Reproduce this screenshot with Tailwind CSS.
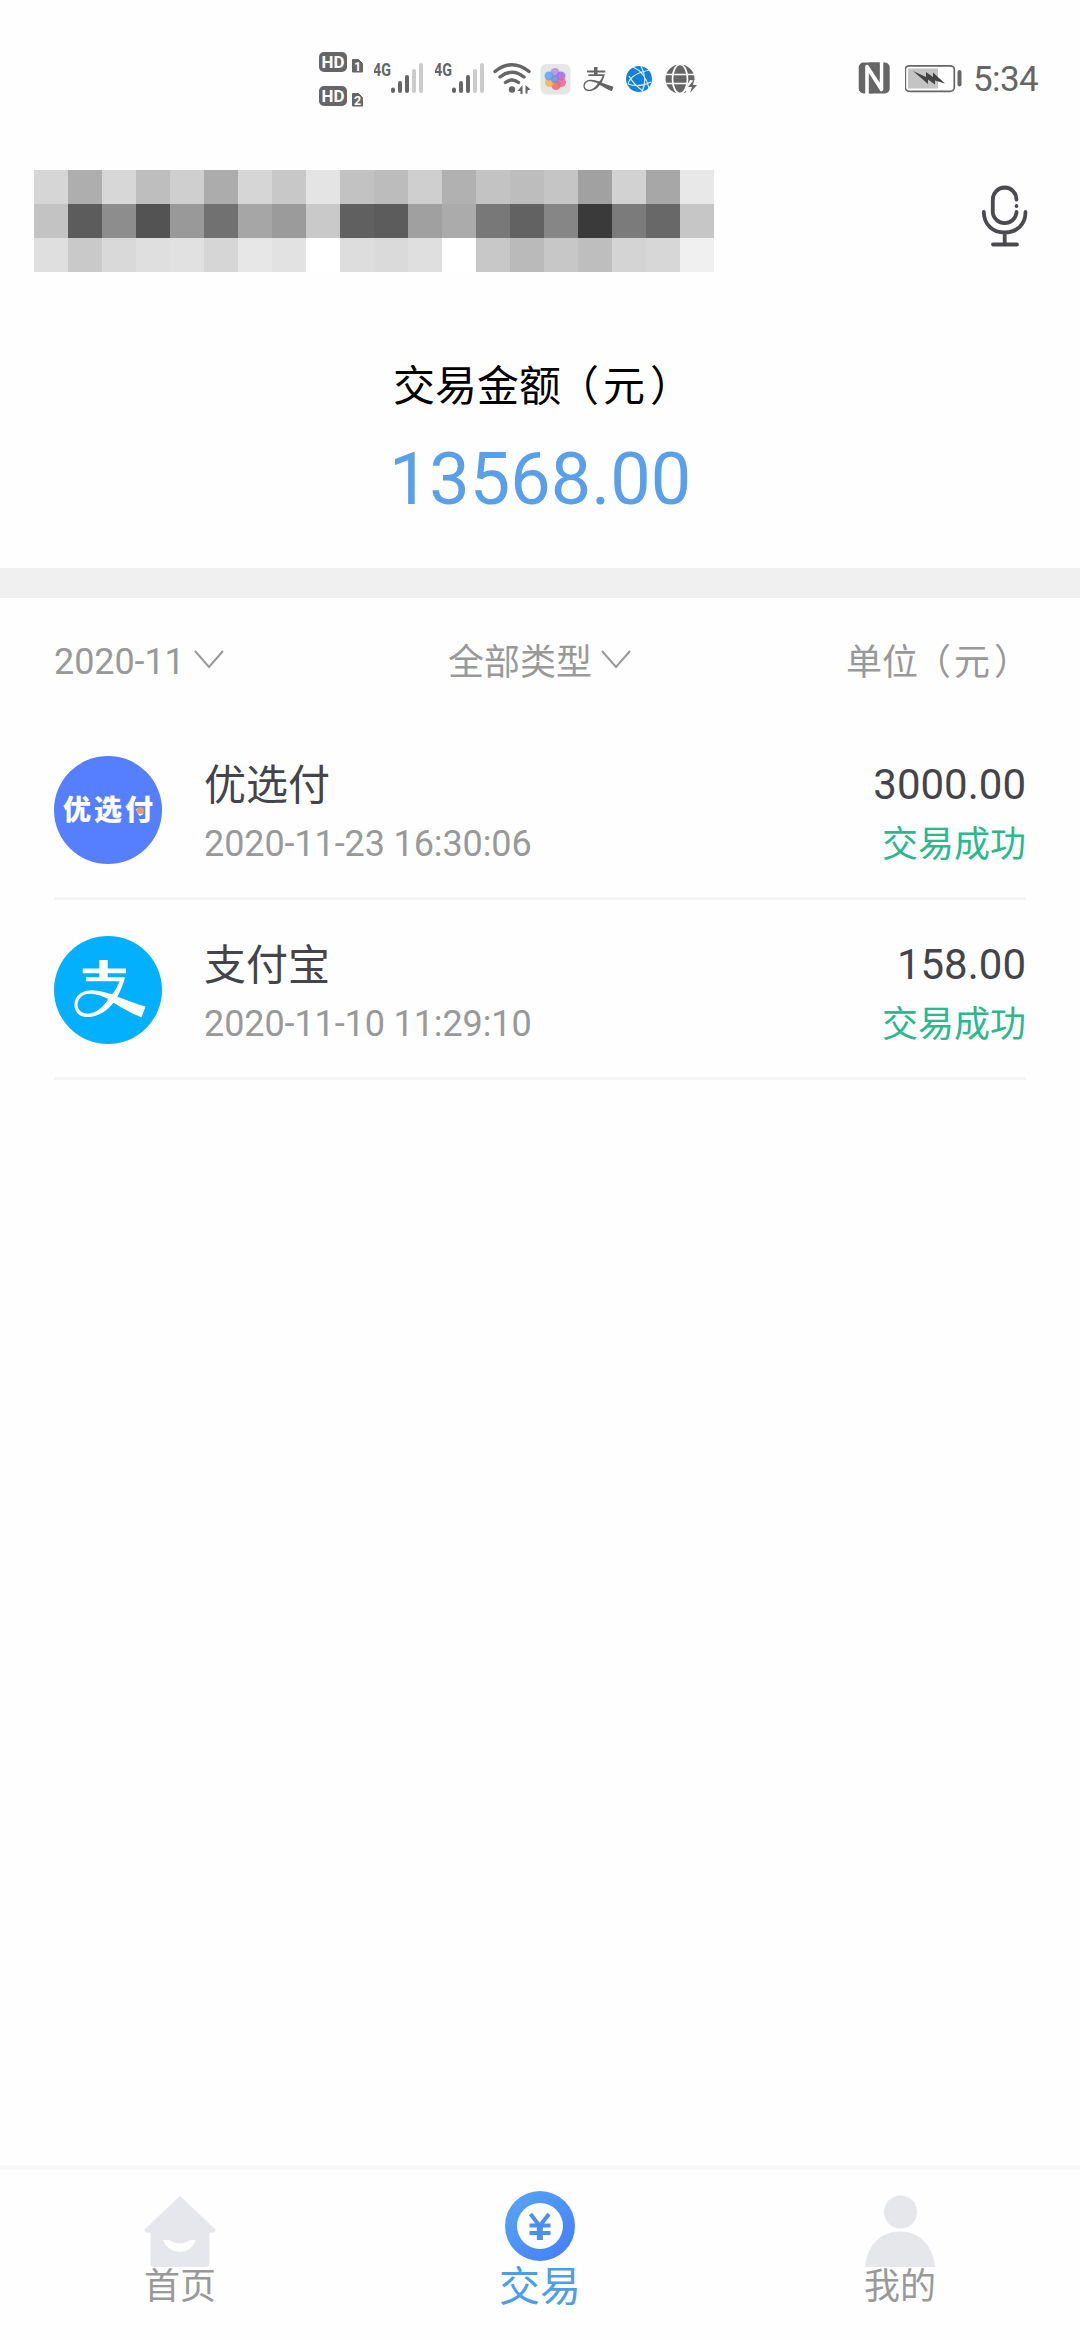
<!DOCTYPE html>
<html lang="zh-CN">
<head>
<meta charset="utf-8">
<title>交易</title>
<script src="https://cdn.jsdelivr.net/npm/@tailwindcss/browser@4"></script>
</head>
<body class="flex h-[2340px] w-[1080px] flex-col overflow-hidden bg-[#fefefe] font-['Noto_Sans_CJK_SC',sans-serif] text-[#999]">

<svg class="hidden">
  <symbol id="alipay" viewBox="20 24 72 58">
    <path d="M45.3 24h8.400v8.500H72v4.800H53.700v4H71C68 53 62 66 53 73.500C44 81 32 83 25.500 79C18.500 74 19 63 25.500 58C35 51 48 55 58 58.500C62 54 64 49 65.500 45.300H32v-4H45.300v-4H28.700v-4.800H45.300Z M54.500 63C45 58.500 33 55 27 61C22 66 22.500 73 27.500 76C37 81 47 74 54.500 63Z" fill="currentColor" fill-rule="evenodd"/>
    <path d="M56 57.500C68 62.500 79 67 91.500 70.500L87.500 81.500C74 76 64 69 53.500 63.500Z" fill="currentColor"/>
  </symbol>
</svg>

<!-- status bar -->
<header class="flex h-[170px] shrink-0 pt-[45px] pl-[319px] text-[#666]">
  <svg class="h-[65px] w-[55px]" viewBox="319 45 55 65" fill="#666">
    <rect x="319" y="52" width="28" height="20" rx="5"/>
    <rect x="319" y="86" width="28" height="20" rx="5"/>
    <path d="M352.500 59.500h6l4 4v8.500h-10z M352.500 93.500h6l4 4v8.500h-10z" stroke="#666" stroke-linejoin="round"/>
    <g fill="#fff" font-family="Roboto" font-weight="700">
      <text x="321.500" y="68" font-size="17" textLength="23" lengthAdjust="spacingAndGlyphs">HD</text>
      <text x="321.500" y="102" font-size="17" textLength="23" lengthAdjust="spacingAndGlyphs">HD</text>
      <text x="354" y="70.500" font-size="12.500">1</text>
      <text x="354" y="104.500" font-size="12.500">2</text>
    </g>
  </svg>
  <svg class="h-[65px] w-[61px]" viewBox="374 45 61 65">
    <text x="373" y="76" font-family="Roboto" font-weight="700" font-size="18" textLength="18" lengthAdjust="spacingAndGlyphs" fill="#666">4G</text>
    <g stroke-width="4" stroke-linecap="round"><path d="M393 89.500v1.500M400 83v8M407 77v14" stroke="#666"/><path d="M414 71v20M421 65v26" stroke="#cbcbcb"/></g>
  </svg>
  <svg class="h-[65px] w-[57px]" viewBox="435 45 57 65">
    <text x="434" y="76" font-family="Roboto" font-weight="700" font-size="18" textLength="18" lengthAdjust="spacingAndGlyphs" fill="#666">4G</text>
    <g stroke-width="4" stroke-linecap="round"><path d="M454 89.500v1.500M461 83v8M468 77v14" stroke="#666"/><path d="M475 71v20M482 65v26" stroke="#cbcbcb"/></g>
  </svg>
  <svg class="h-[65px] w-[48px]" viewBox="492 45 48 65">
    <g fill="none" stroke="#666" stroke-width="3.400" stroke-linecap="round"><path d="M495 71.500Q512 58 529 71.500M500 77Q512 67.500 524 77M505.500 82.500Q512 77.500 518.500 82.500"/></g>
    <circle cx="512" cy="89.500" r="3.200" fill="#666"/>
    <path d="M522.500 85v9h-2v-3h-3zM525.500 85l5 4.500-3 1v3h-2z" fill="#666"/>
  </svg>
  <svg class="h-[65px] w-[43px]" viewBox="540 45 43 65">
    <rect x="540.500" y="64" width="30" height="30.500" rx="6" fill="#e6e6e6"/>
    <g fill-opacity=".85"><circle cx="555" cy="72.500" r="4.500" fill="#b78ae0"/><circle cx="561" cy="76" r="4.500" fill="#a06be0"/><circle cx="561.500" cy="82.500" r="4.500" fill="#f0609a"/><circle cx="556" cy="85.500" r="4.500" fill="#f06a60"/><circle cx="549.500" cy="82.500" r="4.500" fill="#f7b34e"/><circle cx="549" cy="76" r="4.500" fill="#58a7ee"/><circle cx="555" cy="79" r="4" fill="#6f8fe6"/></g>
  </svg>
  <div class="flex w-[43px] pt-[22px]"><svg class="h-[24.500px] w-[31px]"><use href="#alipay"/></svg></div>
  <svg class="h-[65px] w-[39px]" viewBox="626 45 39 65">
    <circle cx="639" cy="79" r="13" fill="#1580d8"/>
    <g fill="none" stroke="#d9efff" stroke-width="1.200"><path d="M628 84Q631 73 651 70M633 67Q645 72 649 88M628 84Q640 88 651 82M641 66Q648 79 642 92M629 76Q634 85 643 91"/></g>
  </svg>
  <svg class="h-[65px] w-[193px]" viewBox="665 45 193 65">
    <circle cx="680" cy="79" r="14.500" fill="#666"/>
    <g fill="none" stroke="#fefefe" stroke-width="1.700"><path d="M664 74.500h32M664 83.500h32"/><ellipse cx="680" cy="79" rx="7.500" ry="14.500"/></g>
    <path d="M690 80l8 1-1 7-5 7-7-4z" fill="#fefefe"/><path d="M694.500 79l-6.500 8h4l-2 6 7-8h-4z" fill="#666"/>
  </svg>
  <svg class="h-[65px] w-[47px]" viewBox="858 45 47 65">
    <rect x="858.700" y="62.500" width="31" height="31" rx="5" fill="#666"/>
    <path d="M867 94V66.500L882 89.500M866.500 66L881.500 89.500V61" fill="none" stroke="#fefefe" stroke-width="3.600" stroke-linejoin="round"/>
    <path d="M869.500 93.500V76L880 92.500" fill="#666"/>
    <path d="M869 62.500L879.500 79V62.500Z" fill="#666"/>
  </svg>
  <svg class="h-[65px] w-[68px]" viewBox="905 45 68 65">
    <rect x="905.300" y="65.800" width="49" height="25.500" rx="4" fill="#fefefe" stroke="#666" stroke-width="1.700"/>
    <rect x="908" y="68.500" width="30" height="20" fill="#c4c4c4"/>
    <path d="M913 71l13 6v-5l7 5v-4.500l12 11-10-3v4l-7-5v4.500z" fill="#444"/>
    <rect x="957.500" y="70" width="4" height="16.500" rx="2" fill="#666"/>
  </svg>
  <span class="font-[Roboto] text-[35px] leading-[70px] tracking-[-0.600px]">5:34</span>
</header>

<!-- masked merchant name and voice button -->
<section class="flex h-[152px] shrink-0 justify-between pr-[51px] pl-[34px]">
  <div class="grid h-[102px] w-[680px] grid-cols-20 grid-rows-3">
    <i class="bg-[#d6d6d6]"></i><i class="bg-[#aeaeae]"></i><i class="bg-[#d7d7d7]"></i><i class="bg-[#bebebe]"></i><i class="bg-[#cfcfcf]"></i><i class="bg-[#acacac]"></i><i class="bg-[#d6d6d6]"></i><i class="bg-[#c8c8c8]"></i><i class="bg-[#e4e4e4]"></i><i class="bg-[#c2c2c2]"></i><i class="bg-[#bcbcbc]"></i><i class="bg-[#cfcfcf]"></i><i class="bg-[#b1b1b1]"></i><i class="bg-[#c3c3c3]"></i><i class="bg-[#bdbdbd]"></i><i class="bg-[#c5c5c5]"></i><i class="bg-[#a1a1a1]"></i><i class="bg-[#d2d2d2]"></i><i class="bg-[#a7a7a7]"></i><i class="bg-[#e8e8e8]"></i>
    <i class="bg-[#c3c3c3]"></i><i class="bg-[#5c5c5c]"></i><i class="bg-[#8d8d8d]"></i><i class="bg-[#535353]"></i><i class="bg-[#999999]"></i><i class="bg-[#717171]"></i><i class="bg-[#a6a6a6]"></i><i class="bg-[#9b9b9b]"></i><i class="bg-[#c9c9c9]"></i><i class="bg-[#606060]"></i><i class="bg-[#5c5c5c]"></i><i class="bg-[#a0a0a0]"></i><i class="bg-[#ababab]"></i><i class="bg-[#787878]"></i><i class="bg-[#626262]"></i><i class="bg-[#868686]"></i><i class="bg-[#3a3a3a]"></i><i class="bg-[#7b7b7b]"></i><i class="bg-[#686868]"></i><i class="bg-[#c6c6c6]"></i>
    <i class="bg-[#dfdfdf]"></i><i class="bg-[#c9c9c9]"></i><i class="bg-[#d9d9d9]"></i><i class="bg-[#dfdfdf]"></i><i class="bg-[#e1e1e1]"></i><i class="bg-[#d6d6d6]"></i><i class="bg-[#e7e7e7]"></i><i class="bg-[#e2e2e2]"></i><i class="bg-white"></i><i class="bg-[#dddddd]"></i><i class="bg-[#dadada]"></i><i class="bg-[#dfdfdf]"></i><i class="bg-white"></i><i class="bg-[#c8c8c8]"></i><i class="bg-[#bababa]"></i><i class="bg-[#c7c7c7]"></i><i class="bg-[#bebebe]"></i><i class="bg-[#d4d4d4]"></i><i class="bg-[#d7d7d7]"></i><i class="bg-[#f0f0f0]"></i>
  </div>
  <svg class="mt-3 h-[70px] w-[50px]" viewBox="978 182 50 70" fill="none" stroke="#4a4a50" stroke-width="3.800" stroke-linecap="round">
    <path d="M1015.500 199.500A12 12 0 0 0 1003.700 187.500A12 12 0 0 0 991.800 199.500V213A12 12 0 0 0 1015.500 213V212M1015.500 205.900v.2"/>
    <path d="M982.800 212C983 225 992 232.500 1003.600 232.500S1024.500 225 1024.500 212M1003.700 233v11M992 244.500h24"/>
  </svg>
</section>

<!-- month total -->
<section class="flex h-[246px] shrink-0 flex-col items-center">
  <h1 class="mt-[31px] w-[294px] text-[42px] leading-[60px] whitespace-nowrap text-black">交易金额<span class="mr-1 -ml-1">（</span>元<span class="ml-[5px]">）</span></h1>
  <p class="mt-[23px] font-[Roboto] text-[72px] leading-[88px] text-[#599fe9]">13568.00</p>
</section>
<div class="h-[30px] shrink-0 bg-[#f0f0f0]"></div>

<!-- filters -->
<nav class="flex h-[122px] shrink-0 items-start justify-between px-[54px] pt-[37px] text-[36px] leading-[48px]">
  <div class="flex w-[180px] gap-[9px]">
    <span class="mt-[3px] font-[Roboto] tracking-[-0.100px]">2020-11</span>
    <svg class="mt-[15px] h-[20px] w-[30px] shrink-0" viewBox="0 0 30 20" fill="none" stroke="#999" stroke-width="2"><path d="M1 1L15 17L29 1"/></svg>
  </div>
  <div class="flex w-[184px] gap-[9px]">
    <span class="w-[144px] shrink-0">全部类型</span>
    <svg class="mt-[15px] h-[20px] w-[30px] shrink-0" viewBox="0 0 30 20" fill="none" stroke="#999" stroke-width="2"><path d="M1 1L15 17L29 1"/></svg>
  </div>
  <span class="w-[180px] whitespace-nowrap">单位<span class="mr-[3px] -ml-[3px]">（</span>元<span class="ml-1">）</span></span>
</nav>

<!-- transactions -->
<main class="grow px-[54px]">
  <article class="flex h-[180px] border-b-3 border-[#f5f5f5] pt-9">
    <div class="relative flex size-[108px] shrink-0 items-center justify-center rounded-full bg-[#557fff] text-[28px] font-black tracking-[3px] whitespace-nowrap text-white">
      <span class="-mt-1 pl-[3px]">优选付</span>
      <i class="absolute top-[51px] left-[83px] size-[7px] rounded-full bg-[#e89a5c]"></i>
    </div>
    <div class="ml-[42px] grow">
      <h2 class="-mt-px text-[42px] leading-[54px] text-[#44444a]">优选付</h2>
      <p class="mt-2 font-[Roboto] text-[36px] leading-[54px] tracking-[-0.100px]">2020-11-23 16:30:06</p>
    </div>
    <div class="text-right">
      <p class="mt-[2px] font-[Roboto] text-[42px] leading-[54px] text-[#44444a]">3000.00</p>
      <p class="mt-[2px] text-[36px] leading-[54px] text-[#2bb88c]">交易成功</p>
    </div>
  </article>
  <article class="flex h-[180px] border-b-3 border-[#f5f5f5] pt-9">
    <div class="size-[108px] shrink-0 rounded-full bg-[#02b0fe] pt-6 pl-5 text-white">
      <svg class="h-[58px] w-[72px]"><use href="#alipay"/></svg>
    </div>
    <div class="ml-[42px] grow">
      <h2 class="-mt-px text-[42px] leading-[54px] text-[#44444a]">支付宝</h2>
      <p class="mt-2 font-[Roboto] text-[36px] leading-[54px] tracking-[-0.100px]">2020-11-10 11:29:10</p>
    </div>
    <div class="text-right">
      <p class="mt-[2px] font-[Roboto] text-[42px] leading-[54px] text-[#44444a]">158.00</p>
      <p class="mt-[2px] text-[36px] leading-[54px] text-[#2bb88c]">交易成功</p>
    </div>
  </article>
</main>

<!-- tab bar -->
<footer class="grid h-[175px] shrink-0 grid-cols-3 border-t-5 border-[#f9f9f9] text-center text-[36px] leading-[48px]">
  <div class="flex flex-col items-center pt-[21px]">
    <svg class="h-[76px] w-[80px]" viewBox="140 2191 80 76">
      <path d="M180 2196L215.500 2229.500Q216 2233 209.500 2233V2263Q209.500 2267 205 2267H154Q150.500 2267 150.500 2263V2233Q144 2233 144.500 2229.500Z" fill="#e6e7ed"/>
      <path d="M163 2240H169Q180 2247 190 2240H196Q191 2252 180 2252Q168 2252 163 2240Z" fill="#fefefe"/>
    </svg>
    <span class="-mt-[8px]">首页</span>
  </div>
  <div class="flex flex-col items-center pt-[21px] text-[#4f9de8]">
    <svg class="h-[70px] w-[70px]" viewBox="0 0 70 70">
      <defs><linearGradient id="coin" x1="0" y1="0" x2="1" y2="1"><stop offset=".1" stop-color="#56a3f2"/><stop offset=".9" stop-color="#4680fa"/></linearGradient></defs>
      <circle cx="35" cy="35" r="35" fill="url(#coin)"/><circle cx="35" cy="35" r="23" fill="#fefefe"/>
      <path d="M25.500 23L34.700 35L44 23M24.500 34.500h21M24.500 42h21" fill="none" stroke="#4c8fee" stroke-width="4"/><path d="M34.900 33v16" stroke="#4c8fee" stroke-width="6"/>
    </svg>
    <span class="-mt-[2px] text-[41px]">交易</span>
  </div>
  <div class="flex flex-col items-center pt-[21px]">
    <svg class="h-[76px] w-[80px]" viewBox="861 2191 80 76">
      <circle cx="901.500" cy="2212" r="16.500" fill="#e6e7ea"/>
      <path d="M866 2267C868 2245 882 2231.500 901 2231.500S934 2245 936 2267Z" fill="#e6e7ea"/>
    </svg>
    <span class="-mt-[8px]">我的</span>
  </div>
</footer>
</body>
</html>
